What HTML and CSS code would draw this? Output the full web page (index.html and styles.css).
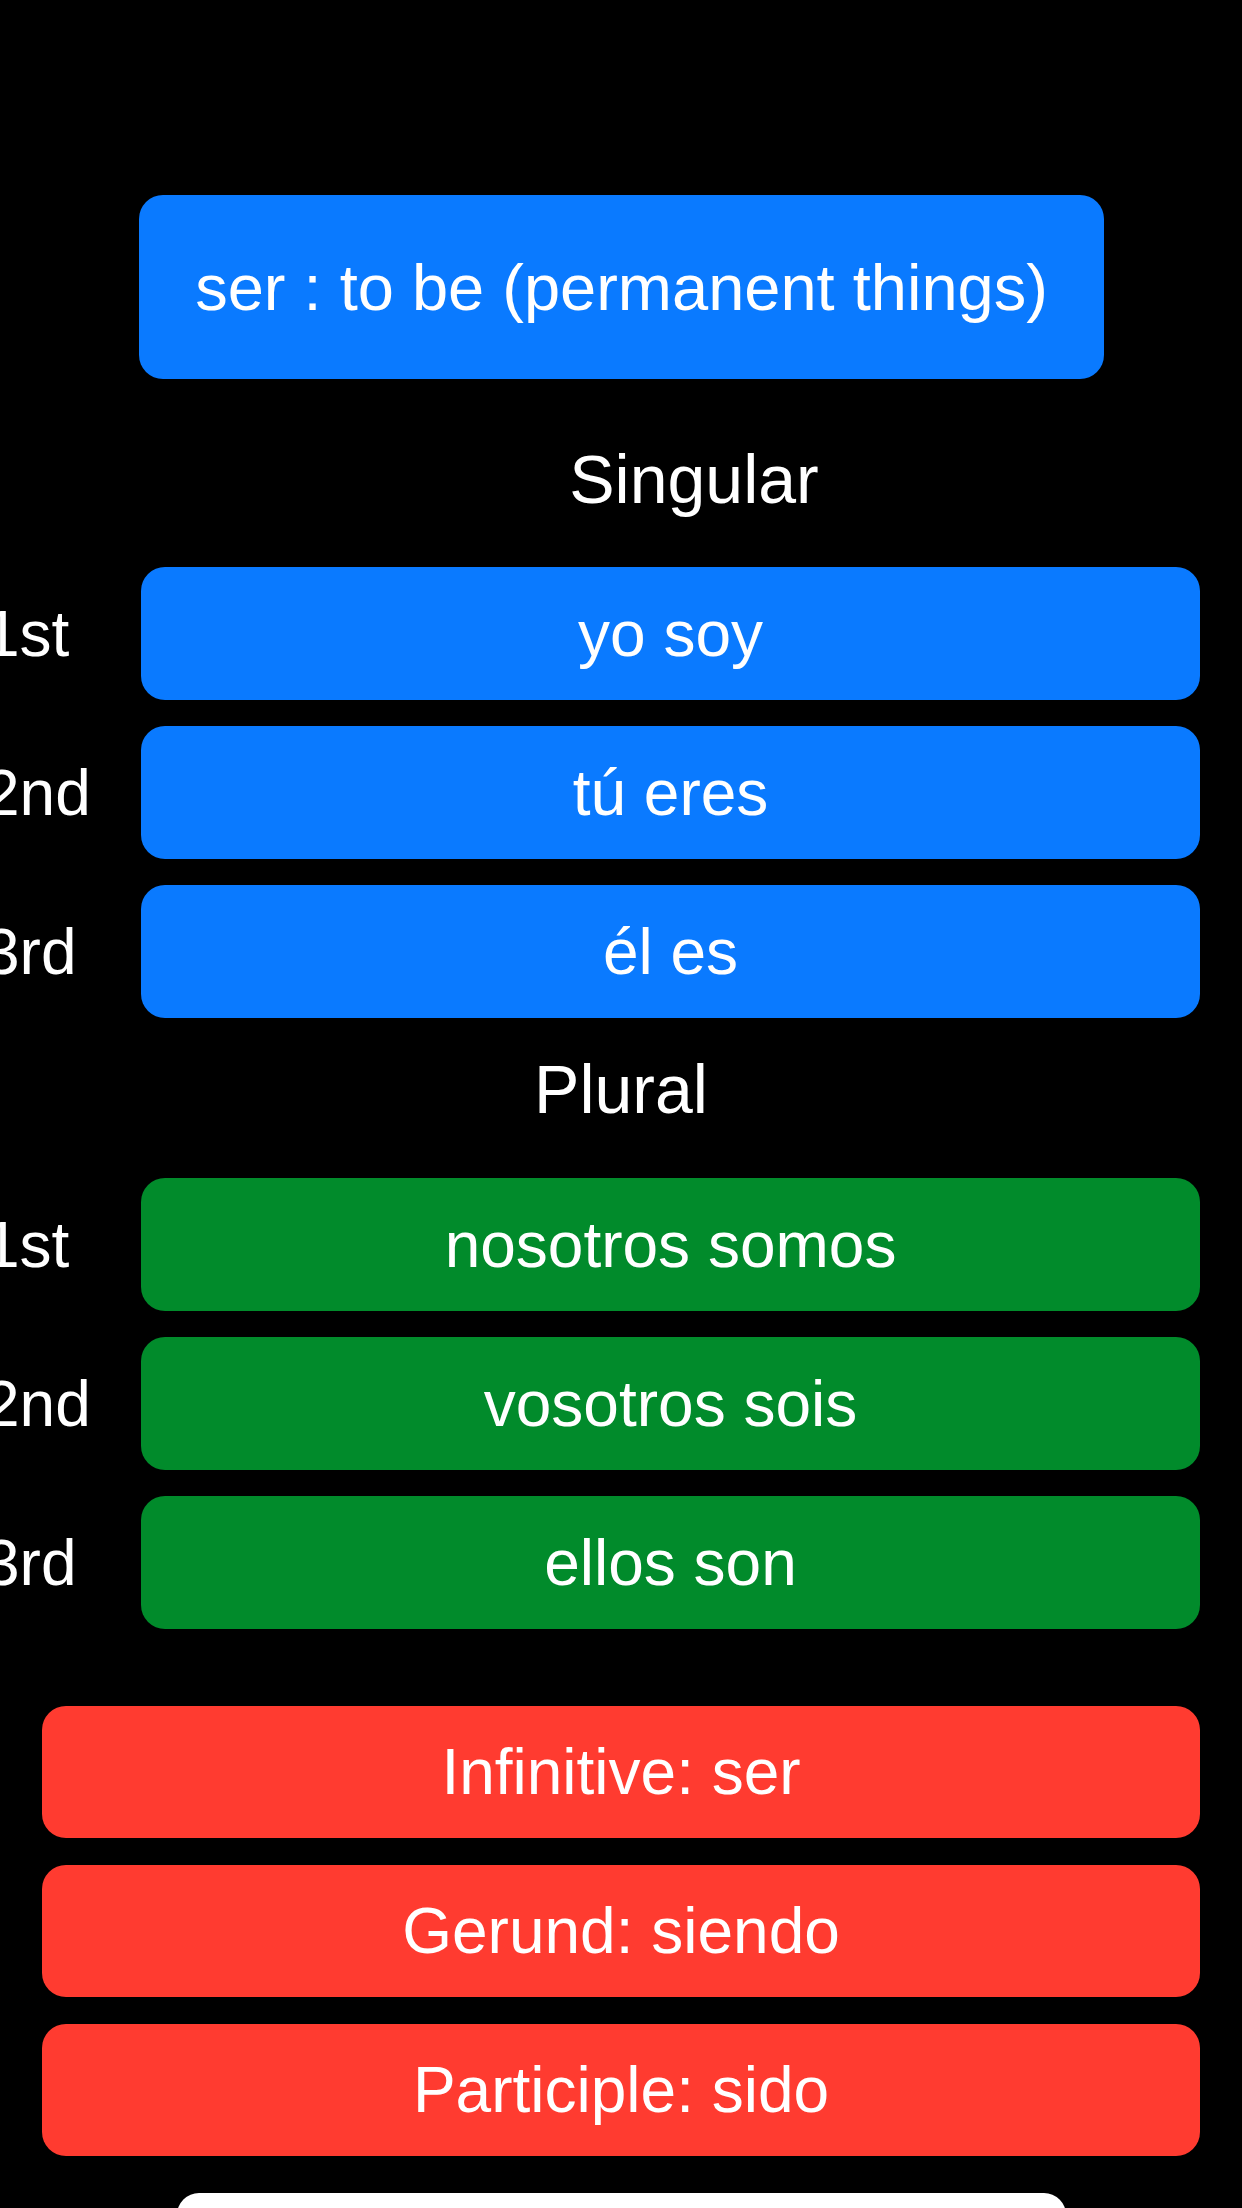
FILE: index.html
```html
<!DOCTYPE html>
<html lang="es">
<head>
<meta charset="utf-8">
<title>ser</title>
<link rel="stylesheet" href="styles.css">
</head>
<body>
<main class="page">
  <div class="title-box">ser : to be (permanent things)</div>

  <div class="head head-singular">Singular</div>
  <div class="rows">
    <div class="row"><span class="label">1st</span><div class="cell blue">yo soy</div></div>
    <div class="row"><span class="label">2nd</span><div class="cell blue">tú eres</div></div>
    <div class="row"><span class="label">3rd</span><div class="cell blue">él es</div></div>
  </div>

  <div class="head head-plural">Plural</div>
  <div class="rows">
    <div class="row"><span class="label">1st</span><div class="cell green">nosotros somos</div></div>
    <div class="row"><span class="label">2nd</span><div class="cell green">vosotros sois</div></div>
    <div class="row"><span class="label">3rd</span><div class="cell green">ellos son</div></div>
  </div>

  <div class="forms">
    <div class="cell red">Infinitive: ser</div>
    <div class="cell red">Gerund: siendo</div>
    <div class="cell red">Participle: sido</div>
  </div>

  <div class="bottom-card"></div>
</main>
</body>
</html>
```

FILE: styles.css
```css
html, body {
  margin: 0;
  padding: 0;
  background: #000;
}

body {
  width: 1242px;
  height: 2208px;
  overflow: hidden;
  color: #fff;
  font-family: "Liberation Sans", Arial, sans-serif;
}

.page {
  padding-top: 195px;
  display: flex;
  flex-direction: column;
}

.title-box {
  margin-left: 139px;
  width: 965px;
  height: 184px;
  border-radius: 24px;
  background: #0a7aff;
  display: flex;
  align-items: center;
  justify-content: center;
  font-size: 65px;
}

.head {
  display: flex;
  align-items: center;
  justify-content: center;
  box-sizing: border-box;
  font-size: 68px;
}

.head-singular {
  height: 188px;
  padding-top: 12px;
  padding-left: 146px;
}

.head-plural {
  height: 160px;
  padding-bottom: 18px;
}

.rows {
  display: flex;
  flex-direction: column;
  gap: 26px;
  margin-right: 42px;
}

.row {
  display: flex;
  align-items: center;
  height: 133px;
}

.label {
  width: 157px;
  margin-left: -16px;
  font-size: 64px;
  flex-shrink: 0;
}

.cell {
  flex: 1;
  height: 133px;
  border-radius: 24px;
  display: flex;
  align-items: center;
  justify-content: center;
  font-size: 64px;
}

.blue { background: #0a7aff; }
.green { background: #018b2b; }
.red { background: #ff3b30; }

.forms {
  margin-top: 77px;
  margin-left: 42px;
  margin-right: 42px;
  display: flex;
  flex-direction: column;
  gap: 27px;
}

.forms .cell {
  flex: none;
  height: 132px;
}

.bottom-card {
  margin-top: 37px;
  margin-left: 177px;
  width: 889px;
  height: 80px;
  background: #fff;
  border-radius: 22px 22px 0 0;
}
```
